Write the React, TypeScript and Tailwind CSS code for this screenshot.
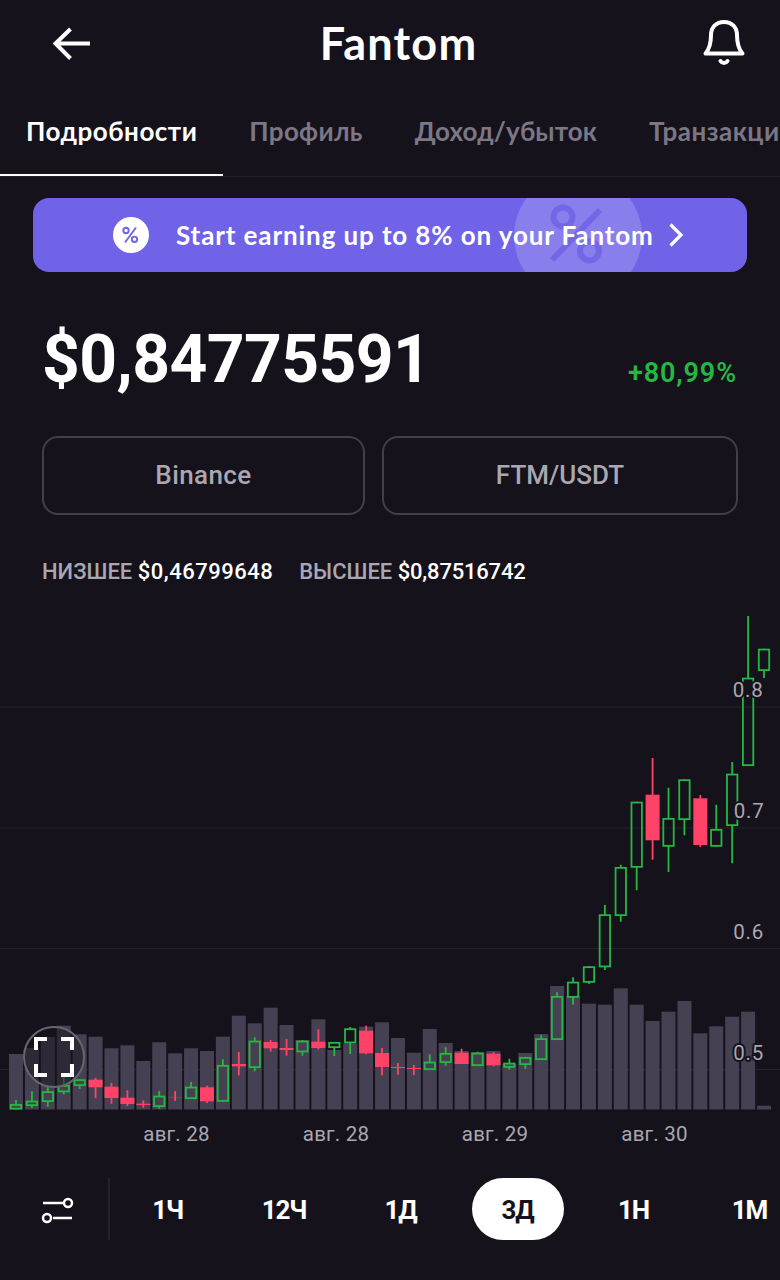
const TABS = [
  { label: 'Подробности', spacing: 'tracking-[0.5px]', active: true },
  { label: 'Профиль', spacing: 'tracking-[0.3px]', active: false },
  { label: 'Доход/убыток', spacing: 'tracking-[0.1px]', active: false },
  { label: 'Транзакции', spacing: 'tracking-[0.5px]', active: false },
]

const RANGES = [
  { label: '1Ч', width: 'w-[117px]' },
  { label: '12Ч', width: 'w-[116px]' },
  { label: '1Д', width: 'w-[117px]' },
  { label: '3Д', width: 'w-[117px]', active: true },
  { label: '1Н', width: 'w-[115px]' },
  { label: '1М', width: 'w-[117px]' },
]

type Candle = {
  up: boolean
  high: number
  top: number
  bottom: number
  low: number
  volume: number
}

const up = (high: number, top: number, bottom: number, low: number, volume: number): Candle => ({
  up: true, high, top, bottom, low, volume,
})
const down = (high: number, top: number, bottom: number, low: number, volume: number): Candle => ({
  up: false, high, top, bottom, low, volume,
})

// high, body top, body bottom, low, volume top
const CANDLES: Candle[] = [
  up(1100, 1104, 1109.5, 1109.5, 1054),
  up(1091.3, 1100.7, 1106, 1107.7, 1048),
  up(1087, 1091.3, 1102, 1106.7, 1037),
  up(1076.7, 1085, 1092.3, 1094.3, 1025.7),
  up(1079.3, 1079.3, 1086, 1089, 1034.3),
  down(1078, 1079.7, 1087.3, 1098.3, 1036.7),
  down(1083, 1086.7, 1098, 1103.7, 1048.3),
  down(1090.3, 1097.7, 1104, 1106, 1045.3),
  down(1100.3, 1103.7, 1105, 1107.7, 1061),
  up(1091, 1095.7, 1107, 1108.7, 1042.3),
  down(1091, 1097.2, 1097.5, 1101, 1053.3),
  up(1082, 1086.7, 1099, 1099, 1048.3),
  down(1085.7, 1087.3, 1101.3, 1103, 1051),
  up(1059.3, 1065, 1101.7, 1101.7, 1036.7),
  down(1052, 1064, 1066.3, 1075.3, 1015.7),
  up(1037.3, 1040.7, 1068, 1071.3, 1023.3),
  down(1040, 1042, 1048.3, 1051.7, 1007.7),
  down(1039, 1048, 1050, 1055.7, 1025),
  up(1040, 1040.7, 1052.3, 1055.7, 1040),
  down(1029.3, 1041.7, 1048, 1049.3, 1019.3),
  up(1042, 1042, 1048, 1056, 1050),
  up(1027, 1028.3, 1043.3, 1054, 1043.5),
  down(1025.7, 1030.7, 1053.3, 1054.3, 1026.7),
  down(1048, 1053, 1067, 1075.3, 1022.3),
  down(1063, 1067, 1068, 1074.7, 1038),
  down(1065, 1068, 1069, 1075, 1052.7),
  up(1054.3, 1061.7, 1070, 1070, 1029),
  up(1047.3, 1053, 1063, 1065.7, 1043),
  down(1048.7, 1052.7, 1064, 1064, 1051),
  up(1051.7, 1052.7, 1066, 1066, 1052),
  down(1052, 1053.7, 1065.3, 1066.3, 1051),
  up(1058.7, 1062.7, 1067.7, 1069.7, 1064),
  up(1057, 1057, 1065, 1068.7, 1053),
  up(1035.3, 1038.3, 1060, 1060, 1034),
  up(992.3, 996, 1040, 1040, 986),
  up(977.3, 981.7, 997.7, 1004.7, 996),
  up(966.3, 966.3, 982.7, 984, 1003.7),
  up(905, 914.3, 967.3, 970, 1004.7),
  up(864.7, 867, 916, 921.7, 988.3),
  up(801.7, 801.7, 867.7, 890.3, 1004.7),
  down(758, 794.7, 840.3, 859.7, 1021),
  up(787.7, 818, 846.7, 872, 1011.7),
  up(779.3, 779.3, 820, 835.3, 1001),
  down(795, 798.3, 845, 847, 1033.3),
  up(804.7, 829, 846.7, 846.7, 1026.3),
  up(762, 773.7, 826, 863.3, 1016.7),
  up(616, 677.7, 766, 766, 1011.7),
  up(648.7, 648.7, 671, 678, 1105.7),
]

const BASE = 1109.5
const PRICES = [
  { label: '0.8', line: 707, x: 763.5, y: 697 },
  { label: '0.7', line: 828, x: 764.5, y: 818 },
  { label: '0.6', line: 948.5, x: 764, y: 939 },
  { label: '0.5', line: 1069.5, x: 764, y: 1060 },
]
const DATES = [
  { label: 'авг. 28', x: 176.5 },
  { label: 'авг. 28', x: 336 },
  { label: 'авг. 29', x: 495 },
  { label: 'авг. 30', x: 654.5 },
]

function PriceChart() {
  return (
    <svg viewBox="0 600 780 550" className="block h-[550px] w-[780px]">
      {PRICES.map((p) => (
        <path key={p.label} d={`M0 ${p.line}H780`} stroke="#25222d" strokeWidth="1" />
      ))}
      {CANDLES.map((c, i) => (
        <rect key={i} x={9 + i * 15.915} y={c.volume} width="14" height={BASE - c.volume} fill="#464152" />
      ))}
      {CANDLES.map((c, i) => {
        const x = 16 + i * 15.915
        if (!c.up) {
          return (
            <g key={i} fill="#ff4268">
              <rect x={x - 0.9} y={c.high} width="1.8" height={c.low - c.high} />
              <rect x={x - 7} y={c.top} width="14" height={c.bottom - c.top} />
            </g>
          )
        }
        return (
          <g key={i} stroke="#26b743" strokeWidth="1.8" fill="none">
            <path d={`M${x} ${c.high}V${c.top + 0.8}M${x} ${c.bottom - 0.8}V${c.low}`} />
            <rect x={x - 5.2} y={c.top + 0.85} width="10.4" height={c.bottom - c.top - 1.7} />
          </g>
        )
      })}
      <g className="font-['Roboto',sans-serif] text-[20.5px]" fill="#aaa7b1">
        {PRICES.map((p) => (
          <text
            key={p.label}
            x={p.x}
            y={p.y}
            textAnchor="end"
            stroke="#15121c"
            strokeWidth="4"
            strokeLinejoin="round"
            paintOrder="stroke"
            className="tracking-[0.8px]"
          >
            {p.label}
          </text>
        ))}
        {DATES.map((d) => (
          <text key={d.x} x={d.x} y="1140.5" textAnchor="middle" className="tracking-[0.2px]">
            {d.label}
          </text>
        ))}
      </g>
    </svg>
  )
}

export default function App() {
  return (
    <div className="flex h-[1280px] w-[780px] flex-col overflow-hidden bg-[#15121c] font-['Lato',sans-serif] text-white">
      <header className="flex h-[88px] shrink-0 items-center justify-between pr-[34px] pl-[52px]">
        <button aria-label="Назад">
          <svg width="40" height="34" viewBox="0 0 40 34" fill="none" stroke="currentColor" strokeWidth="4">
            <path d="M18.500 2 3.500 16.500 18.500 31.500M3.500 16.500H38" />
          </svg>
        </button>
        <h1 className="pr-px pb-0.5 pl-1 text-[45px] leading-none font-bold tracking-[1.2px]">Fantom</h1>
        <button aria-label="Уведомления" className="-mt-[3px]">
          <svg
            width="44"
            height="50"
            viewBox="0 0 44 50"
            fill="none"
            stroke="currentColor"
            strokeWidth="4"
            strokeLinecap="round"
            strokeLinejoin="round"
          >
            <path d="M22 4C14 4 9 9.500 9 17C9 26 7.500 31 3.500 35.500H40.500C36.500 31 35 26 35 17C35 9.500 30 4 22 4Z" />
            <path d="M18.500 43C20 45.500 24 45.500 25.500 43" />
          </svg>
        </button>
      </header>

      <nav className="flex h-[89px] shrink-0 border-b border-[#25222d]">
        {TABS.map((tab) => (
          <button
            key={tab.label}
            className={`shrink-0 border-b-2 px-[26px] text-[26px] font-bold whitespace-nowrap ${tab.spacing} ${
              tab.active ? 'border-white' : 'border-transparent text-[#7b7784]'
            }`}
          >
            {tab.label}
          </button>
        ))}
      </nav>

      <button className="relative mx-[33px] mt-[21px] flex h-[74px] w-[714px] shrink-0 items-center overflow-hidden rounded-[16px] bg-[#7063e8] pl-20">
        <svg className="absolute top-[-26px] left-[481px]" width="128" height="128" viewBox="0 0 128 128">
          <circle cx="64" cy="64" r="64" fill="#887eec" />
          <g fill="none" stroke="#7467e6" strokeWidth="6">
            <circle cx="49" cy="45" r="9.500" />
            <circle cx="75.500" cy="79" r="9.500" />
            <path d="M86 38 38 88" />
          </g>
        </svg>
        <svg className="relative shrink-0" width="36" height="36" viewBox="0 0 36 36">
          <circle cx="18" cy="18" r="18" fill="#fff" />
          <g fill="none" stroke="#7063e8" strokeWidth="1.900">
            <circle cx="13" cy="13.500" r="2.700" />
            <circle cx="21.500" cy="22.300" r="2.700" />
            <path d="M23 10.500 12 25.500" />
          </g>
        </svg>
        <span className="relative ml-[27px] text-[26px] leading-none font-bold tracking-[0.89px] whitespace-nowrap">
          Start earning up to 8% on your Fantom
        </span>
        <svg className="relative ml-[15px] shrink-0" width="15" height="24" viewBox="0 0 15 24" fill="none" stroke="#fff" strokeWidth="3.200">
          <path d="M1.500 1.500 12 12 1.500 22.500" />
        </svg>
      </button>

      <section className="flex h-[164px] shrink-0 items-baseline justify-between pt-[55px] pr-[43px] pl-[42px] font-['Roboto',sans-serif]">
        <p className="text-[66px] leading-none font-bold tracking-[-0.6px]">$0,84775591</p>
        <p className="text-[27px] leading-none font-semibold tracking-[0.9px] text-[#26b743]">+80,99%</p>
      </section>

      <div className="mx-[42px] flex h-[79px] shrink-0 gap-[17px] font-['Roboto',sans-serif] text-[26px] font-medium text-[#aaa7b1]">
        <button className="w-[323px] rounded-[16px] border-2 border-[#423e4c] tracking-[0.4px]">Binance</button>
        <button className="flex-1 rounded-[16px] border-2 border-[#423e4c]">FTM/USDT</button>
      </div>

      <div className="mt-10 flex h-[45px] shrink-0 gap-[26px] pl-[42px] font-['Roboto',sans-serif] text-[22px] font-medium text-[#aaa7b1]">
        <p>
          НИЗШЕЕ <span className="tracking-[0.5px] text-white">$0,46799648</span>
        </p>
        <p>
          ВЫСШЕЕ <span className="tracking-[-0.2px] text-white">$0,87516742</span>
        </p>
      </div>

      <div className="relative h-[550px] shrink-0">
        <PriceChart />
        <button
          aria-label="На весь экран"
          className="absolute top-[426px] left-[23px] flex size-[62px] items-center justify-center rounded-full border-2 border-[#696570] bg-[#15121c]/50"
        >
          <svg width="42" height="42" viewBox="0 0 42 42" fill="none" stroke="#fff" strokeWidth="4">
            <path d="M3 14V3H14M28 3H39V14M39 28V39H28M14 39H3V28" />
          </svg>
        </button>
      </div>

      <footer className="flex h-[118px] shrink-0 items-center">
        <button aria-label="Настройки" className="flex h-[62px] w-[110px] shrink-0 items-center justify-center border-r-2 border-[#25222d] pt-1 pl-2">
          <svg width="34" height="28" viewBox="0 0 34 28" fill="none" stroke="#fff" strokeWidth="2.500">
            <path d="M2 6H22M12 21H31" />
            <circle cx="27" cy="6" r="4" />
            <circle cx="6" cy="21" r="4" />
          </svg>
        </button>
        <div className="-ml-px flex">
          {RANGES.map((r) => (
            <div key={r.label} className={`flex shrink-0 justify-center ${r.width}`}>
              <button
                className={`h-[62px] rounded-full pt-0.5 font-['Roboto',sans-serif] text-[26px] font-bold tracking-[-1.2px] ${
                  r.active ? 'w-[92px] bg-white text-[#15121c]' : ''
                }`}
              >
                {r.label}
              </button>
            </div>
          ))}
        </div>
      </footer>
    </div>
  )
}
